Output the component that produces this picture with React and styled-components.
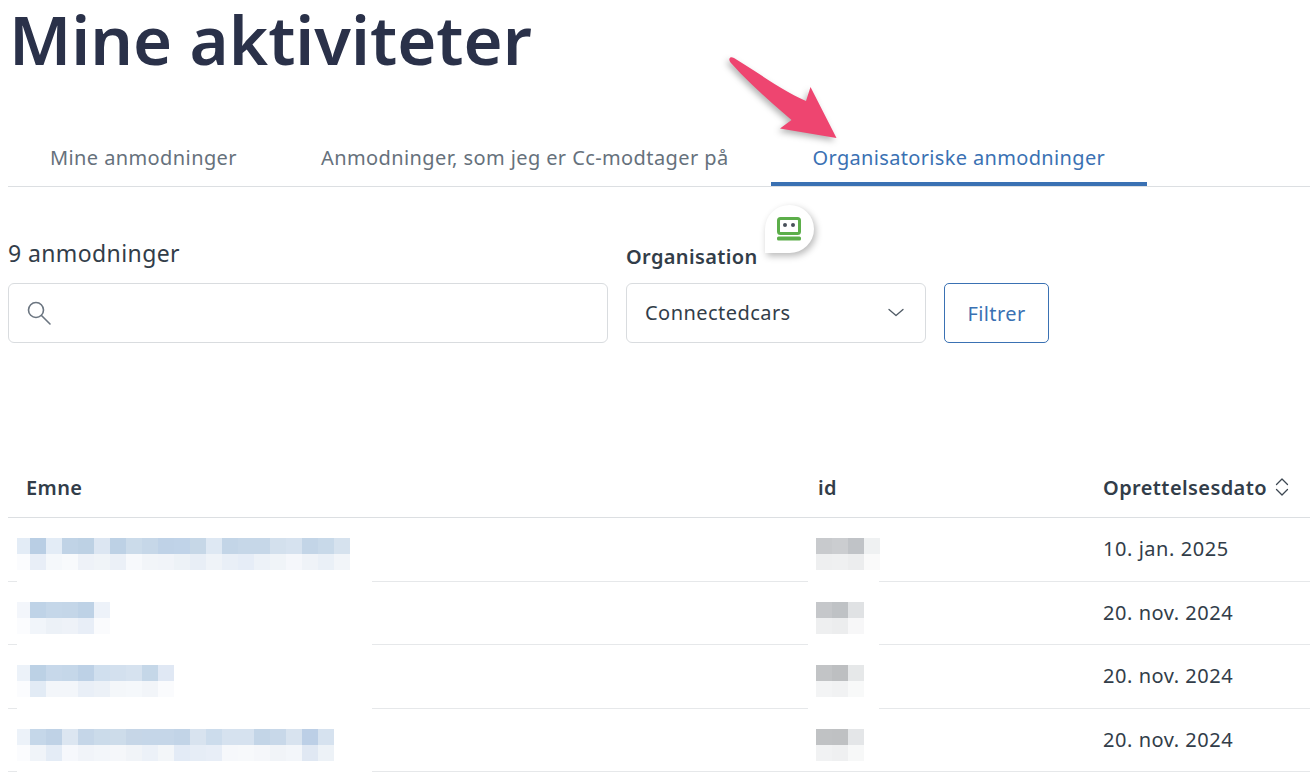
import React from "react";
import styled, { createGlobalStyle } from "styled-components";

const Global = createGlobalStyle`
  html, body { margin: 0; padding: 0; background: #fff; overflow: hidden; height: 776px; }
  body { font-family: "Noto Sans", "Open Sans", sans-serif; color: #323d49; }
`;
const Page = styled.div`
  position: relative; width: 1310px; height: 776px; overflow: hidden; padding-left: 8px; box-sizing: border-box;
`;
const Title = styled.h1`
  margin: 0; height: 118px; padding-left: 1px; font-size: 67px; line-height: 78px; font-weight: 600; color: #2a3149;
`;
const Tabs = styled.div`
  display: flex; height: 68px; border-bottom: 1px solid #dcdfe2; width: 1302px;
`;
const Tab = styled.div`
  display: flex; align-items: center; height: 68px; padding: 14px 42px 0; box-sizing: border-box; font-size: 20px; white-space: nowrap;
  letter-spacing: ${p => (p.$active ? "0.34px" : "0.4px")};
  color: ${p => (p.$active ? "#3a71b3" : "#66717c")};
  border-bottom: ${p => (p.$active ? "4px solid #3a71b3" : "0")};
  padding-bottom: ${p => (p.$active ? "0" : "4px")};
`;
const Filters = styled.div`
  display: flex; align-items: flex-end; gap: 18px; margin-top: 51px;
`;
const Field = styled.div`
  display: flex; flex-direction: column; position: relative;
`;
const Count = styled.div`
  font-size: 23px; line-height: 30px; margin-bottom: 15px; letter-spacing: 0.4px; color: #323d49;
`;
const Label = styled.div`
  font-size: 20px; line-height: 28px; margin-bottom: 12px; font-weight: 600; letter-spacing: 0.35px; color: #323d49;
`;
const SearchBox = styled.div`
  width: 600px; height: 60px; box-sizing: border-box; border: 1px solid #d9dcdf; border-radius: 6px; display: flex; align-items: center; padding-left: 17px;
`;
const SelectBox = styled.div`
  width: 300px; height: 60px; box-sizing: border-box; border: 1px solid #d9dcdf; border-radius: 6px; display: flex; align-items: center; justify-content: space-between;
  padding: 0 21px 2px 18px; font-size: 20px; letter-spacing: 0.45px; color: #323d49;
`;
const FilterButton = styled.button`
  width: 105px; height: 60px; box-sizing: border-box; border: 1px solid #3a71b3; border-radius: 5px; background: #fff; color: #3a71b3;
  font: 20px "Noto Sans", sans-serif; letter-spacing: 0.4px; padding: 0;
`;
const Badge = styled.div`
  position: absolute; left: 139px; top: -38px; width: 49px; height: 48px; padding-right: 2px; box-sizing: border-box; background: #fff; border-radius: 50% 50% 50% 0;
  box-shadow: 2px 3px 7px rgba(0,0,0,.28); display: flex; align-items: center; justify-content: center;
`;
const Table = styled.div`
  margin-top: 117px; width: 1302px;
`;
const HeadRow = styled.div`
  display: grid; grid-template-columns: 810px 285px 1fr; height: 57px; align-items: center; border-bottom: 1px solid #dcdfe2;
`;
const HeadCell = styled.div`
  font-size: 20px; font-weight: 600; letter-spacing: 0.4px; color: #323d49; display: flex; align-items: center; gap: 8px; padding-left: ${p => p.$pad || 0}px; margin-top: -3px;
`;
const Row = styled.div`
  position: relative; display: grid; grid-template-columns: 810px 285px 1fr; height: 62.6px; align-items: center; border-bottom: 1px solid #e6e8ea;
`;
const DateCell = styled.div`
  grid-column: 3; font-size: 20px; letter-spacing: 0.55px; color: #323d49; margin-top: -1px;
`;
const Patch = styled.div`
  position: absolute; top: 4px; left: ${p => p.$left}px; width: ${p => p.$width}px; height: ${p => p.$h}px; background: #fff; z-index: 1;
  padding: 16px 0 0 ${p => p.$pad}px; box-sizing: border-box;
`;
const MosaicRow = styled.div`
  display: flex; height: 16px;
`;
const Block = styled.div`
  height: 16px; flex: none; width: ${p => p.$w}px; background: ${p => p.$c};
`;
const ArrowSvg = styled.svg`
  position: absolute; left: 720px; top: 50px; width: 130px; height: 100px; overflow: visible;
  filter: drop-shadow(-2px 3px 3px rgba(0,0,0,.3));
`;

const Mosaic = ({ rows, first }) => (
  <>
    {rows.map((r, i) => (
      <MosaicRow key={i}>
        {r.map((c, j) => <Block key={j} $c={"#" + c} $w={j === 0 ? first : 16} />)}
      </MosaicRow>
    ))}
  </>
);

const data = [
  {
    date: "10. jan. 2025",
    subj: [
      ["e3ecf6","b9cee4","e3ecf6","c0d3e6","bdd1e4","dce6f2","bdd1e5","cbdbea","c6d7e8","bfd2e7","c0d3e8","c6d7e7","dee8f3","c3d5e7","c6d7e8","c6d7e8","d3e0ed","d6e2ef","c3d5e7","c8d9e9","d6e2ee"],
      ["fbfcfe","e8eef7","f5f8fb","f8fafc","eef2f8","f0f4f8","ebf0f7","f7f9fc","f2f5f9","f1f4f9","edf2f7","e8eef6","eff3f8","e9eff7","e6edf7","edf2f8","f0f4f8","f5f7fb","eff3f8","eaf0f7","f2f5f9"],
    ],
    id: [["c8cacd","cbcdd0","c0c3c7","eff1f2"],["eeeff0","eff0f1","ecedee","fafafa"]],
  },
  {
    date: "20. nov. 2024",
    subj: [
      ["f3f6fb","bfd3e7","c5d7e9","c4d6e8","bed2e6","edf2f9"],
      ["fbfcfe","f1f5fa","ecf1f7","eef2f8","e8eef7","fafbfd"],
    ],
    id: [["c5c7ca","bfc2c5","e0e2e4"],["eeeff0","ecedee","f7f7f8"]],
  },
  {
    date: "20. nov. 2024",
    subj: [
      ["ecf2f9","bcd1e5","c7d8ea","c5d7e9","bdd1e6","d0dfee","d3e0ee","d6e2ef","c5d7e8","e0e8f4"],
      ["fbfcfe","e2ebf5","f3f6fa","f3f6fa","e9eff7","ecf1f7","f4f7fa","f5f8fb","f2f5f9","fafbfd"],
    ],
    id: [["c2c4c6","bdbfc1","e6e8e9"],["f3f4f5","f1f2f3","f8f9f9"]],
  },
  {
    date: "20. nov. 2024",
    subj: [
      ["ecf2f9","c5d7e9","bfd2e6","dce6f1","c5d6e8","cbdbea","cddcea","c6d6e7","c5d6e8","c5d6e8","c2d4e7","d8e3ef","ccdcec","d6e2ef","d6e2ef","c3d5e7","c8d8e9","d8e3ef","bccfe6","d6e2ef"],
      ["fbfcfe","f0f4f9","e4ecf6","f6f8fc","f1f4f9","f3f6fa","f5f7fa","f1f4f8","ecf1f8","f3f6f9","e3ebf6","e6edf6","e8eef7","f6f8fb","f7f9fb","f5f7fa","f1f4f8","f3f6fa","e0e8f3","edf2f7"],
    ],
    id: [["c0c2c4","bfc1c3","e4e6e8"],["f1f2f3","eff0f1","f7f8f8"]],
  },
];

export default function App() {
  return (
    <Page>
      <Global />
      <Title>Mine aktiviteter</Title>
      <Tabs>
        <Tab>Mine anmodninger</Tab>
        <Tab>Anmodninger, som jeg er Cc-modtager på</Tab>
        <Tab $active>Organisatoriske anmodninger</Tab>
      </Tabs>
      <Filters>
        <Field>
          <Count>9 anmodninger</Count>
          <SearchBox>
            <svg width="26" height="26" viewBox="0 0 26 26" fill="none" stroke="#6b7580" strokeWidth="1.6" strokeLinecap="round">
              <circle cx="10" cy="10" r="7.5" />
              <path d="M15.5 15.5l8.5 8.5" />
            </svg>
          </SearchBox>
        </Field>
        <Field>
          <Badge>
            <svg width="26" height="26" viewBox="0 0 26 26">
              <rect x="2.5" y="2.5" width="21" height="15" rx="2" fill="#fff" stroke="#5cae4a" strokeWidth="3" />
              <circle cx="9" cy="9" r="2" fill="#48505a" />
              <circle cx="17" cy="9" r="2" fill="#48505a" />
              <rect x="1" y="20.5" width="24" height="4" rx="1.5" fill="#5cae4a" />
            </svg>
          </Badge>
          <Label>Organisation</Label>
          <SelectBox>
            Connectedcars
            <svg width="16" height="9" viewBox="0 0 16 9" fill="none" stroke="#4f5a65" strokeWidth="1.3" strokeLinecap="round" strokeLinejoin="round">
              <path d="M1 1.5l7 6 7-6" />
            </svg>
          </SelectBox>
        </Field>
        <FilterButton>Filtrer</FilterButton>
      </Filters>
      <Table>
        <HeadRow>
          <HeadCell $pad={18}>Emne</HeadCell>
          <HeadCell>id</HeadCell>
          <HeadCell>
            Oprettelsesdato
            <svg width="14" height="20" viewBox="0 0 14 20" fill="none" stroke="#3d4752" strokeWidth="1.3" strokeLinecap="round" strokeLinejoin="round">
              <path d="M1.5 7.5L7 2l5.5 5.5M1.5 12.5L7 18l5.5-5.5" />
            </svg>
          </HeadCell>
        </HeadRow>
        {data.map((r, i) => (
          <Row key={i}>
            <Patch $left={9} $width={355} $h={64} $pad={0}>
              <Mosaic rows={r.subj} first={13} />
            </Patch>
            <Patch $left={800} $width={71} $h={i === 3 ? 56 : 64} $pad={8}>
              <Mosaic rows={r.id} first={16} />
            </Patch>
            <DateCell>{r.date}</DateCell>
          </Row>
        ))}
      </Table>
      <ArrowSvg viewBox="720 50 130 100">
        <path
          d="M729.5 58.5 C730.5 56.5 732 57 734 58 C760 74 785 92 806 101 L810.5 87 L836.5 138 L780 128.5 L791.5 120 C770 102 748 82 730.5 62.5 C729.5 61 729 60 729.5 58.5 Z"
          fill="#ee4570"
        />
      </ArrowSvg>
    </Page>
  );
}
